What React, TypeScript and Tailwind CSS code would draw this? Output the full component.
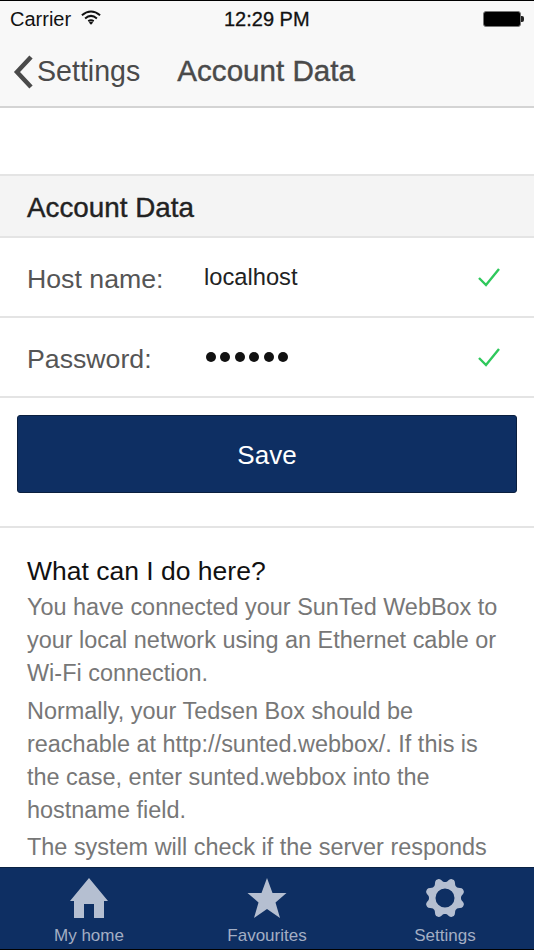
const FONT = "font-['Liberation_Sans',Arial,sans-serif]"

// wavy eight-lobed outline, sampled round the circle
const GEAR_OUTLINE = Array.from({ length: 96 }, (_, i) => {
  const a = (i / 96) * Math.PI * 2
  const wave = Math.max(-0.75, Math.min(0.75, Math.cos(8 * a - Math.PI)))
  const r = 18 + 2.6 * wave
  return `${(20 + r * Math.sin(a)).toFixed(2)} ${(21 - r * Math.cos(a)).toFixed(2)}`
}).join(' L')

function HomeIcon() {
  return (
    <svg width="40" height="42" viewBox="0 0 40 42" fill="#b5bfd1">
      <path d="M20 1 L39 24 L35 24 L35 41 L25 41 L25 27 L15 27 L15 41 L5 41 L5 24 L1 24 Z" />
    </svg>
  )
}

function StarIcon() {
  return (
    <svg width="40" height="42" viewBox="0 0 40 42" fill="#b5bfd1">
      <path d="M20 1 L25.5 16 L39.5 16 L28.5 25.5 L33 41 L20 32 L7 41 L11.5 25.5 L0.5 16 L14.5 16 Z" />
    </svg>
  )
}

function GearIcon() {
  return (
    <svg width="40" height="42" viewBox="0 0 40 42">
      <path
        fillRule="evenodd"
        fill="#b5bfd1"
        d={`M${GEAR_OUTLINE} Z M20 11.5 A9.5 9.5 0 1 0 20 30.5 A9.5 9.5 0 1 0 20 11.5 Z`}
      />
    </svg>
  )
}

function Check() {
  return (
    <svg width="24" height="20" viewBox="0 0 24 20" fill="none" stroke="#2fc85c" strokeWidth="2.4">
      <path d="M2 11 L9 18 L22 2" />
    </svg>
  )
}

function FormRow({ label, children }: { label: string; children: React.ReactNode }) {
  return (
    <div className="flex h-[80px] items-center border-b-2 border-[#e4e4e4] pl-[27px] pr-[33px]">
      <span className="mt-[4px] w-[177px] text-[26.7px] text-[#555555]">{label}</span>
      <div className="flex-1">{children}</div>
      <Check />
    </div>
  )
}

function Tab({ icon, label }: { icon: React.ReactNode; label: string }) {
  return (
    <div className="flex w-[178px] flex-col items-center pt-[9px]">
      {icon}
      <span className="mt-[7px] text-[17px] leading-[20px] text-[#a3aec4]">{label}</span>
    </div>
  )
}

export default function App() {
  return (
    <div className={`${FONT} flex h-[950px] w-[534px] flex-col overflow-hidden bg-white`}>
      <header className="h-[108px] shrink-0 border-t border-b-2 border-t-black border-b-[#d4d4d4] bg-[#f8f8f8]">
        <div className="relative flex h-[35px] items-center justify-between pl-[10px] pr-[10px] text-[20px] text-[#111]">
          <div className="flex items-center gap-[10px]">
            <span>Carrier</span>
            <svg className="mt-[-3px]" width="20" height="15" viewBox="0 0 22 16" fill="none" stroke="#111" strokeWidth="2.2">
              <path d="M1 5.5 Q11 -2.5 21 5.5" />
              <path d="M4.5 9 Q11 3.5 17.5 9" />
              <path d="M8 12 Q11 10 14 12" />
              <path d="M11 16 L8.6 13.5 Q11 12 13.4 13.5 Z" fill="#111" stroke="none" />
            </svg>
          </div>
          <span className="absolute left-[224px] top-[3px] font-medium [-webkit-text-stroke:0.3px_#111]">12:29 PM</span>
          <div className="flex items-center">
            <div className="h-[16px] w-[38px] rounded-[3px] border border-[#777] bg-black" />
            <div className="h-[6px] w-[3px] rounded-r-[2px] bg-[#222]" />
          </div>
        </div>
        <div className="flex h-[69px] items-center pt-[2px] text-[#4a4a4a]">
          <svg className="ml-[13px]" width="20" height="34" viewBox="0 0 20 34" fill="none" stroke="#4a4a4a" strokeWidth="4.5">
            <path d="M18 2 L4 17 L18 32" />
          </svg>
          <span className="ml-[4px] text-[28.6px]">Settings</span>
          <span className="ml-[37px] text-[29.6px] [-webkit-text-stroke:0.4px_#4a4a4a]">Account Data</span>
        </div>
      </header>

      <main className="min-h-0 flex-1 overflow-hidden">
        <section className="mt-[66px] border-t-2 border-[#e4e4e4]">
          <div className="flex h-[62px] items-center border-b-2 border-[#e4e4e4] bg-[#f4f4f4] pl-[27px] pt-[4px] text-[27.8px] text-[#222] [-webkit-text-stroke:0.4px_#222]">
            Account Data
          </div>
          <FormRow label="Host name:">
            <span className="relative top-[1px] text-[23.7px] text-[#222]">localhost</span>
          </FormRow>
          <FormRow label="Password:">
            <div className="flex gap-[4.4px] pl-[2px]">
              {[0, 1, 2, 3, 4, 5].map((i) => (
                <span key={i} className="size-[10px] rounded-full bg-[#111]" />
              ))}
            </div>
          </FormRow>
        </section>

        <div className="px-[17px] pt-[17px]">
          <button className="flex h-[78px] w-full items-center justify-center rounded-[3px] border border-[#0a1f3f] bg-[#0e2f63] pt-[2px] text-[26px] text-white">
            Save
          </button>
        </div>

        <section className="mt-[33px] border-t-2 border-[#e4e4e4] px-[27px] pt-[27px]">
          <h2 className="text-[26.5px] leading-[33px] text-[#111]">What can I do here?</h2>
          <p className="mt-[3px] text-[23.45px] leading-[33px] text-[#777777]">
            You have connected your SunTed WebBox to your local network using an Ethernet cable or Wi-Fi connection.
          </p>
          <p className="mt-[5px] text-[23.45px] leading-[33px] text-[#777777]">
            Normally, your Tedsen Box should be reachable at http://sunted.webbox/. If this is the case, enter sunted.webbox into the hostname field.
          </p>
          <p className="mt-[4px] text-[23.45px] leading-[33px] text-[#777777]">
            The system will check if the server responds
          </p>
        </section>
      </main>

      <nav className="flex h-[83px] shrink-0 justify-between border-t border-b border-t-[#0a2244] border-b-black bg-[#0e2f63]">
        <Tab icon={<HomeIcon />} label="My home" />
        <Tab icon={<StarIcon />} label="Favourites" />
        <Tab icon={<GearIcon />} label="Settings" />
      </nav>
    </div>
  )
}
